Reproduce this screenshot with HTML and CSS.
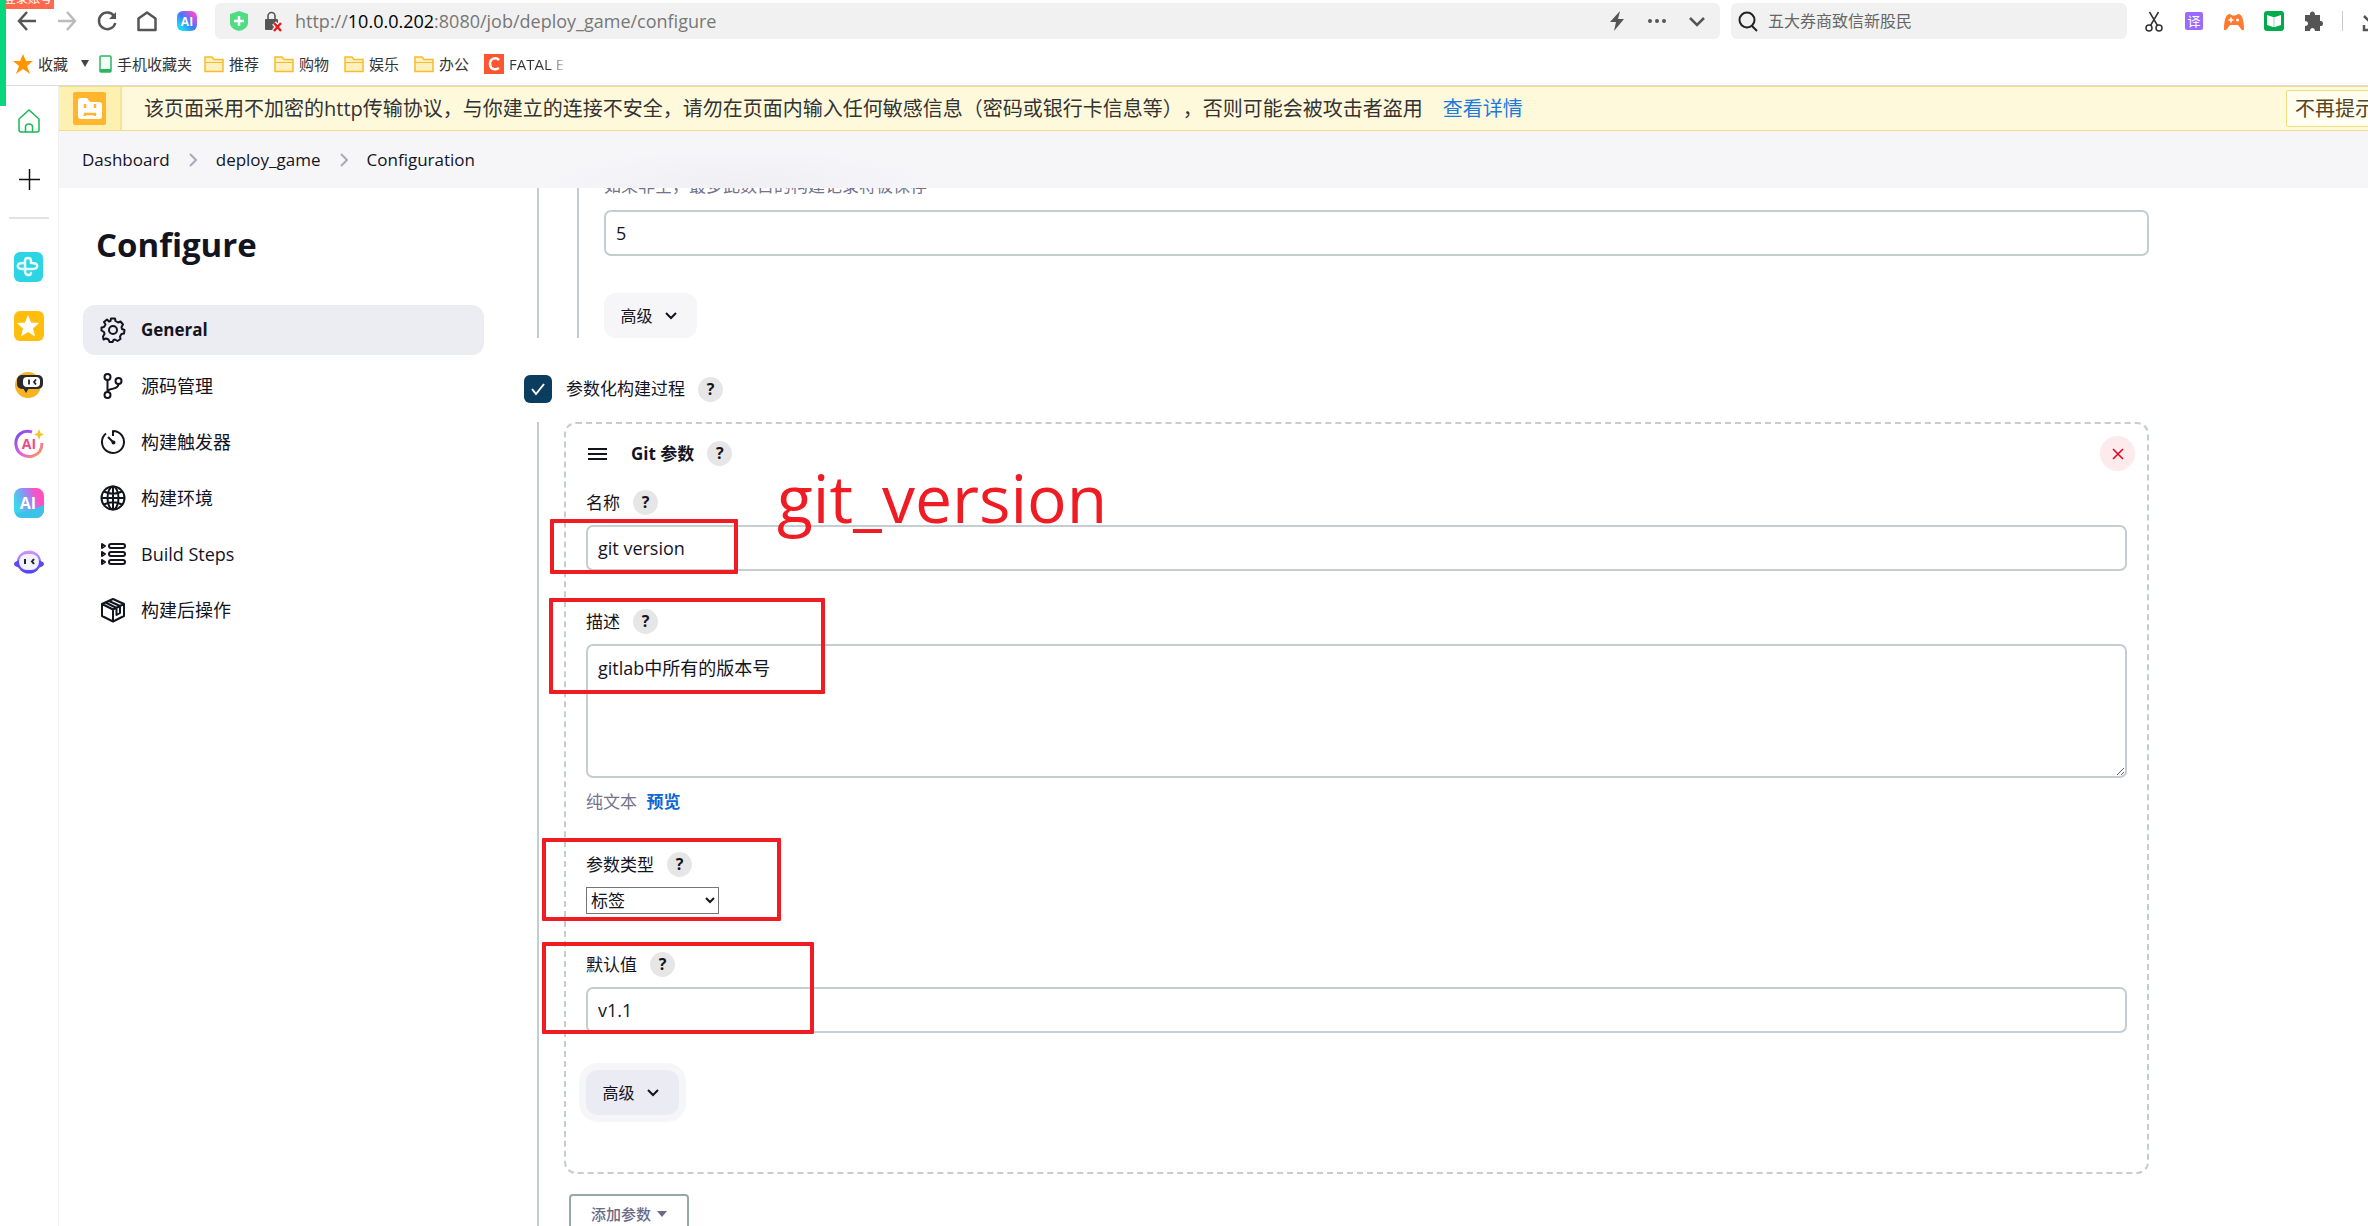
FILE: index.html
```html
<!DOCTYPE html>
<html lang="zh-CN">
<head>
<meta charset="utf-8">
<title>Configure - deploy_game</title>
<link rel="stylesheet" href="styles.css">
</head>
<body>
<div class="login-tag">登录账号</div>
<div class="green-bar"></div>

<header class="toolbar">
  <div class="tools">
    <button class="tool" aria-label="后退"><svg viewBox="0 0 24 24" class="line"><path d="M21 12H4M12 3 4 12l8 9"/></svg></button>
    <button class="tool muted" aria-label="前进"><svg viewBox="0 0 24 24" class="line"><path d="M3 12h17M12 3l8 9-8 9"/></svg></button>
    <button class="tool" aria-label="刷新"><svg viewBox="0 0 24 24" class="line"><path d="M19 7a8.300 8.300 0 1 0 1.300 7"/><path d="M21 3v7h-7z" fill="currentColor" stroke="none"/></svg></button>
    <button class="tool" aria-label="主页"><svg viewBox="0 0 24 24" class="line"><path d="M3.500 9.500 12 3.500l8.500 6V21h-17z" stroke-linejoin="round"/></svg></button>
    <button class="tool" aria-label="AI">
      <svg viewBox="0 0 24 24"><defs><linearGradient id="ai" x1="0" y1="1" x2="1" y2="0"><stop offset=".2" stop-color="#1fd3f5"/><stop offset=".5" stop-color="#3c7bff"/><stop offset=".85" stop-color="#f04bd0"/></linearGradient></defs><rect x="2" y="2" width="20" height="20" rx="6" fill="url(#ai)"/><text x="12" y="17" class="ai-text">AI</text></svg>
    </button>
  </div>
  <div class="address">
    <svg class="i24" viewBox="0 0 24 24"><path d="M3 5 12 2l9 3v9c0 4-4 7-9 8-5-1-9-4-9-8z" fill="#4fdc82"/><path d="M12 7v10M7 12h10" stroke="#fff" stroke-width="2.500"/></svg>
    <svg class="i24" viewBox="0 0 24 24"><rect x="4" y="10" width="13" height="11" rx="1" fill="#555"/><path d="M7 10V7a3.500 3.500 0 0 1 7 0v3" fill="none" stroke="#555" stroke-width="1.600"/><path d="m13 14 7 8m0-8-7 8" stroke="#f1f1f1" stroke-width="5"/><path d="m13 14 7 8m0-8-7 8" stroke="#e02020" stroke-width="2.500"/></svg>
    <span class="url">http://<b>10.0.0.202</b>:8080/job/deploy_game/configure</span>
    <div class="address-end">
      <svg class="i24" viewBox="0 0 24 24"><path d="M15 2 5 13h6l-2 9L19 10h-6z" fill="#555"/></svg>
      <svg class="i24" viewBox="0 0 24 24" fill="#555"><circle cx="5" cy="12" r="2"/><circle cx="12" cy="12" r="2"/><circle cx="19" cy="12" r="2"/></svg>
      <svg class="i24" viewBox="0 0 24 24"><path d="m5 9 7 7 7-7" fill="none" stroke="#555" stroke-width="2.500"/></svg>
    </div>
  </div>
  <label class="search">
    <svg class="i24" viewBox="0 0 24 24"><circle cx="11" cy="11" r="7.500" fill="none" stroke="#222" stroke-width="2"/><path d="m16 17 5 5" stroke="#222" stroke-width="2"/></svg>
    <input type="text" value="五大券商致信新股民" aria-label="搜索">
  </label>
  <div class="tools tools-end">
    <button class="tool" aria-label="截图"><svg viewBox="0 0 24 24" class="line thin"><circle cx="7" cy="19" r="3"/><circle cx="17" cy="19" r="3"/><path d="m8.500 16.500 8-13.500m-1 13.500L7.500 3"/></svg></button>
    <button class="tool" aria-label="翻译"><span class="translate">译</span></button>
    <button class="tool" aria-label="游戏"><svg viewBox="0 0 24 24"><path d="M2 20c0-6 1-14 5-15 2 0 2 1.500 5 1.500S15 5 17 5c4 1 5 9 5 15 0 2-2 1.500-3 0l-3-4H8l-3 4c-1 1.500-3 2-3 0z" fill="#ff7a30"/><path d="M9 8.500v5M6.500 11h5" stroke="#fff" stroke-width="1.600"/><circle cx="15.500" cy="11" r="1.600" fill="#fff"/></svg></button>
    <button class="tool" aria-label="阅读"><svg viewBox="0 0 24 24"><rect x="2" y="2" width="20" height="20" rx="3" fill="#00ab4c"/><path d="m5 6 6 2v10l-6-2zM19 6l-6 2v10l6-2z" fill="#fff"/><path d="M11 8h2v10h-2z" fill="#c8ecd8"/></svg></button>
    <button class="tool" aria-label="扩展"><svg viewBox="0 0 24 24"><path d="M3 6h5c-1-4 5-5 5 0h5v6c4-1 4 6 0 5v5h-5c0-4-5-4-5 0H3v-5c4 0 4-5 0-5z" fill="#555"/></svg></button>
    <span class="divider"></span>
    <button class="tool" aria-label="下载"><svg viewBox="0 0 24 24" class="line"><path d="m5 7 7 7 7-7M5 16v5h14v-5"/></svg></button>
  </div>
</header>

<nav class="bookmarks">
  <a href="#" class="mark fav"><svg class="i20" viewBox="0 0 20 20"><path d="m10 0 3 7h7l-6 5 3 8-7-5-7 5 3-8-6-5h7z" fill="#ff9500"/></svg>收藏</a>
  <svg class="caret" viewBox="0 0 8 7"><path d="M0 0h8L4 7z" fill="#444"/></svg>
  <a href="#" class="mark phone"><svg viewBox="0 0 13 18"><rect x="1" y="1" width="11" height="16" rx="1" fill="#f3fff6" stroke="#2db563" stroke-width="1.500"/><path d="M1 14h11v3H1z" fill="#2db563"/></svg>手机收藏夹</a>
  <a href="#" class="mark"><svg class="i20" viewBox="0 0 20 20"><path d="M1 17.500V3h7l2 2.500h9v12z" fill="#fff0bd" stroke="#f5bc2c" stroke-width="1.500"/><path d="M1 8.500h18" stroke="#f5bc2c"/></svg>推荐</a>
  <a href="#" class="mark"><svg class="i20" viewBox="0 0 20 20"><path d="M1 17.500V3h7l2 2.500h9v12z" fill="#fff0bd" stroke="#f5bc2c" stroke-width="1.500"/><path d="M1 8.500h18" stroke="#f5bc2c"/></svg>购物</a>
  <a href="#" class="mark"><svg class="i20" viewBox="0 0 20 20"><path d="M1 17.500V3h7l2 2.500h9v12z" fill="#fff0bd" stroke="#f5bc2c" stroke-width="1.500"/><path d="M1 8.500h18" stroke="#f5bc2c"/></svg>娱乐</a>
  <a href="#" class="mark"><svg class="i20" viewBox="0 0 20 20"><path d="M1 17.500V3h7l2 2.500h9v12z" fill="#fff0bd" stroke="#f5bc2c" stroke-width="1.500"/><path d="M1 8.500h18" stroke="#f5bc2c"/></svg>办公</a>
  <a href="#" class="mark"><svg class="i20" viewBox="0 0 20 20"><path d="M0 0h20v20H0z" fill="#fc5531"/><path d="M15 6c-3-3-9-2-9 4s6 6 9 4" fill="none" stroke="#fff" stroke-width="2.500"/></svg><span class="fade">FATAL E</span></a>
</nav>

<div class="window">
  <aside class="dock">
    <a href="#" aria-label="主页"><svg viewBox="0 0 30 30" fill="none" stroke="#19b955" stroke-width="1.500"><path d="M5 13 15 4l10 9v11c0 1-1 2-2 2H7c-1 0-2-1-2-2z"/><path d="M11.500 26v-5c0-4 7-4 7 0v5"/></svg></a>
    <a href="#" aria-label="添加"><svg viewBox="0 0 30 30"><path d="M15.500 4v21M5 14.500h21" stroke="#111" stroke-width="1.500"/></svg></a>
    <hr>
    <a href="#" aria-label="医疗"><svg viewBox="0 0 30 30"><rect width="29" height="30" rx="6" fill="#2dd5e4"/><path d="M17 11V9c0-4-6-4-6 0v10c0 5 6 5 6 2M17 11h1c7 0 7 6 0 6H9c-7 0-7-6 0-6h2" fill="none" stroke="#e8fdff" stroke-width="2.500" stroke-linecap="round"/></svg></a>
    <a href="#" aria-label="收藏"><svg viewBox="0 0 30 30"><rect width="30" height="30" rx="6" fill="#ffbd0c"/><path d="m14 4 3 7.500 8 .5-6 5.500 2 8-7-4.500-7 4.500 2-8L3 12l8-.5z" fill="#fff"/></svg></a>
    <a href="#" aria-label="助手"><svg viewBox="0 0 30 30"><circle cx="14" cy="15" r="13" fill="#f8b321"/><rect x="3" y="5" width="26" height="14" rx="5" fill="#2b2b2d"/><path d="m9 18 3 5 3-5z" fill="#2b2b2d"/><rect x="9" y="7" width="17" height="10" rx="4" fill="#fff"/><path d="M15 9.500v5M22 9.500 20 12l2 2.500" fill="none" stroke="#222" stroke-width="1.800"/></svg></a>
    <a href="#" aria-label="AI 写作"><svg viewBox="0 0 30 30"><defs><linearGradient id="ring" x1="0" y1="0" x2="1" y2="1"><stop offset="0" stop-color="#6a4cf0"/><stop offset=".5" stop-color="#e05be8"/><stop offset="1" stop-color="#ffa040"/></linearGradient></defs><path d="M18 3C8 0 1 7 2 16s10 13 17 11 9-8 9-13" fill="none" stroke="url(#ring)" stroke-width="3"/><path d="m25 0 1.500 4 3.500 1.500L26.500 7 25 11l-1.500-4L20 5.500 23.500 4z" fill="#f4c430"/><text x="15" y="20" class="ai-pink">AI</text></svg></a>
    <a href="#" aria-label="AI 搜索"><svg viewBox="0 0 30 30"><defs><linearGradient id="mix" x1="0" y1=".6" x2="1" y2=".2"><stop offset=".1" stop-color="#3ed5ea"/><stop offset=".5" stop-color="#9a86f5"/><stop offset=".8" stop-color="#ff4fc0"/></linearGradient></defs><rect width="30" height="30" rx="8" fill="url(#mix)"/><path d="M1 25c10 0 19-4 29-8v5a8 8 0 0 1-8 8H8c-3 0-6-2-7-5z" fill="#39c3ea"/><text x="14" y="21" class="ai-white">AI</text></svg></a>
    <a href="#" aria-label="机器人"><svg viewBox="0 0 30 30"><defs><linearGradient id="bot" x1="0" y1="0" x2="0" y2="1"><stop offset="0" stop-color="#d59aff"/><stop offset="1" stop-color="#4840f5"/></linearGradient></defs><ellipse cx="15" cy="15" rx="12" ry="11.500" fill="url(#bot)"/><ellipse cx="15" cy="17" rx="15" ry="5" fill="#5a4cf5"/><rect x="5" y="7" width="20" height="16" rx="8" fill="#f3f2fb"/><path d="M11 12v5M20 12l-2 2.500 2 2.500" stroke="#222" stroke-width="2" fill="none"/></svg></a>
  </aside>

  <div class="page">
    <div class="notice" role="alert">
      <div class="notice-icon"><svg viewBox="0 0 33 33"><rect width="33" height="33" rx="2" fill="#ffb52e"/><path d="M5 9c0-2 1-3 3-3h6l3 4h9c2 0 3 1 3 3v11c0 2-1 3-3 3H8c-2 0-3-1-3-3z" fill="#fff"/><path d="M12 12v4M22 12v4M12 24v-2h10v2" fill="none" stroke="#ffb52e" stroke-width="2.500"/></svg></div>
      <p>该页面采用不加密的http传输协议，与你建立的连接不安全，请勿在页面内输入任何敏感信息（密码或银行卡信息等），否则可能会被攻击者盗用<a href="#">查看详情</a></p>
      <button>不再提示</button>
    </div>

    <nav class="crumbs">
      <a href="#">Dashboard</a>
      <svg viewBox="0 0 8 14"><path d="m1 1 6 6-6 6"/></svg>
      <a href="#">deploy_game</a>
      <svg viewBox="0 0 8 14"><path d="m1 1 6 6-6 6"/></svg>
      <a href="#">Configuration</a>
    </nav>

    <div class="columns">
      <aside class="side">
        <h1>Configure</h1>
        <nav>
          <a href="#" class="item active"><svg viewBox="0 0 26 26"><path d="M10.500 4 11 1.500h4l.5 2.500 2.500 1.500 2.500-1 2.500 3-1.500 2.500.5 2 2.500 1-.5 3.500-2.500.5-1.500 2.500.5 2.500-3 2-2.500-1.500-1.500.5-1 2h-3l-1-2.500-2.500-1-2.500 1L3 19.500 4.500 17 4 15l-2.500-1.500v-3L4 10l1.500-2.500L4 5l3-2.500L9 4.500z"/><circle cx="13" cy="13" r="4"/></svg>General</a>
          <a href="#" class="item"><svg viewBox="0 0 26 26"><circle cx="7.500" cy="4" r="3"/><circle cx="7.500" cy="22" r="3"/><circle cx="18.500" cy="8" r="3"/><path d="M7.500 7v12c0-5 11-1 11-8"/></svg>源码管理</a>
          <a href="#" class="item"><svg viewBox="0 0 26 26"><path d="M6 4.500a11 11 0 1 0 7-2.500v5M8 8l5 5"/><circle cx="13.500" cy="13.500" r="1"/></svg>构建触发器</a>
          <a href="#" class="item"><svg viewBox="0 0 26 26"><circle cx="13" cy="13" r="11.500"/><ellipse cx="13" cy="13" rx="5.500" ry="11.500"/><path d="M13 1.500v23M1.500 13h23M4 6.500c6 3 12 3 18 0M4 19.500c6-3 12-3 18 0"/></svg>构建环境</a>
          <a href="#" class="item"><svg viewBox="0 0 26 26"><rect x="9" y="3" width="16" height="4" rx="2"/><rect x="9" y="11" width="16" height="4" rx="2"/><rect x="9" y="19" width="16" height="4" rx="2"/><path d="m2 3 3 2-3 2zM2 11l3 2-3 2zM2 19l3 2-3 2z"/></svg>Build Steps</a>
          <a href="#" class="item"><svg viewBox="0 0 26 26"><path d="m13 2 11 5v12l-11 5.500L2 19V7zM2 7l11 5.500L24 7M13 12.500v12M5.500 5.500l11 5.500v7l3.500-2V9L9 4"/></svg>构建后操作</a>
        </nav>
      </aside>

      <main class="form">
        <div class="group">
          <div class="nested">
            <p class="help-text" id="keep-help">如果非空，最多此数目的构建记录将被保存</p>
            <input class="text" type="text" value="5" aria-labelledby="keep-help">
            <button class="advanced">高级 <svg viewBox="0 0 12 8"><path d="m1 1 5 5 5-5"/></svg></button>
          </div>
        </div>

        <div class="check-row">
          <input type="checkbox" id="parameterized" checked>
          <label for="parameterized">参数化构建过程</label>
          <button class="help" aria-label="帮助">?</button>
        </div>

        <div class="group">
          <section class="param">
            <div class="param-head">
              <svg viewBox="0 0 22 14"><path d="M2 2h19M2 7h19M2 12h19"/></svg>
              <h2>Git 参数</h2>
              <button class="help" aria-label="帮助">?</button>
              <button class="remove" aria-label="删除"><svg viewBox="0 0 12 12"><path d="m1 1 10 10M11 1 1 11"/></svg></button>
            </div>
            <div class="field">
              <div class="field-label"><label for="name">名称</label><button class="help" aria-label="帮助">?</button></div>
              <input class="text" type="text" id="name" value="git version">
            </div>
            <div class="field">
              <div class="field-label"><label for="desc">描述</label><button class="help" aria-label="帮助">?</button></div>
              <textarea class="text" id="desc">gitlab中所有的版本号</textarea>
              <p class="format">纯文本 <a href="#">预览</a></p>
            </div>
            <div class="field">
              <div class="field-label"><label for="type">参数类型</label><button class="help" aria-label="帮助">?</button></div>
              <select id="type"><option>标签</option></select>
            </div>
            <div class="field">
              <div class="field-label"><label for="default">默认值</label><button class="help" aria-label="帮助">?</button></div>
              <input class="text" type="text" id="default" value="v1.1">
            </div>
            <button class="advanced focused">高级 <svg viewBox="0 0 12 8"><path d="m1 1 5 5 5-5"/></svg></button>
          </section>
          <button class="add">添加参数 <svg viewBox="0 0 10 6"><path d="M0 0h10L5 6z"/></svg></button>
        </div>

        <div class="note note-name"></div>
        <div class="note note-desc"></div>
        <div class="note note-type"></div>
        <div class="note note-default"></div>
        <div class="note-text">git_version</div>
      </main>
    </div>
  </div>
</div>
</body>
</html>
```
FILE: styles.css
```css
* { box-sizing: border-box; }

body {
  margin: 0;
  height: 100vh;
  display: flex;
  flex-direction: column;
  position: relative;
  overflow: hidden;
  background: #fff;
  color: #14141f;
  font: 17px/24px "Open Sans", "Noto Sans CJK SC", sans-serif;
  text-spacing-trim: space-all;
}

h1, h2, p { margin: 0; }
a { color: inherit; text-decoration: none; }
button, input, textarea, select { font: inherit; color: inherit; }
button { padding: 0; border: 0; background: none; }
svg { display: block; flex: none; }

.i24 { width: 24px; height: 24px; }
.i20 { width: 20px; height: 20px; }

/* Browser chrome */
.green-bar {
  position: absolute;
  left: 0;
  top: 0;
  width: 6px;
  height: 106px;
  background: #07d67d;
}

.login-tag {
  position: absolute;
  left: 4px;
  top: -10px;
  height: 19px;
  padding-right: 2px;
  background: #ff6a4f;
  color: #fff;
  font-size: 12px;
  line-height: 18px;
}

.toolbar {
  display: flex;
  flex: none;
  height: 42px;
  padding: 3px 0 3px 15px;
}

.tools { display: flex; align-items: center; gap: 16px; }
.tool { width: 24px; height: 24px; flex: none; color: #555; }
.tool.muted { color: #bbb; }
.line { fill: none; stroke: currentColor; stroke-width: 2.5; }
.line.thin { stroke: #333; stroke-width: 1.5; }
.ai-text, .ai-pink, .ai-white { font: bold 12px "Open Sans", sans-serif; text-anchor: middle; fill: #fff; }
.ai-pink { font-size: 14px; fill: #f04a86; }
.ai-white { font-size: 16px; }

.address {
  display: flex;
  align-items: center;
  flex: 1;
  min-width: 0;
  gap: 10px;
  margin: 0 11px 0 16px;
  padding: 0 11px 0 12px;
  border-radius: 6px;
  background: #f1f1f1;
}
.url { flex: 1; overflow: hidden; white-space: nowrap; font-size: 18px; color: #777; }
.url b { font-weight: 400; color: #000; }
.address-end { display: flex; gap: 16px; }

.search {
  display: flex;
  align-items: center;
  flex: none;
  gap: 8px;
  width: 396px;
  padding-left: 5px;
  border-radius: 6px;
  background: #f1f1f1;
}
.search input { flex: 1; min-width: 0; padding: 0; border: 0; background: none; font-size: 16px; color: #666; }

.tools-end { margin: 0 -15px 0 15px; flex: none; }
.divider { width: 1px; height: 20px; background: #ccc; }
.translate {
  display: block;
  width: 18px;
  height: 18px;
  margin: 0 auto;
  border-radius: 2px;
  background: #9b6bff;
  color: #fff;
  font-size: 13px;
  line-height: 18px;
}

.bookmarks {
  display: flex;
  flex: none;
  align-items: center;
  gap: 15px;
  height: 44px;
  padding: 0 0 0 13px;
  border-bottom: 1px solid #dcdcdc;
  font-size: 15px;
  color: #333;
}
.mark { display: flex; align-items: center; gap: 5px; }
.mark.fav { margin-right: -2px; }
.caret { width: 8px; height: 7px; margin-right: -5px; }
.phone { margin-right: -3px; }
.phone svg { width: 13px; height: 18px; }
.fade {
  background: linear-gradient(90deg, #333 75%, #ddd 100%);
  background-clip: text;
  color: transparent;
}

.window { display: flex; flex: 1; min-height: 0; }

.dock {
  display: flex;
  flex-direction: column;
  flex: none;
  width: 59px;
  padding: 20px 0 0 14px;
  border-right: 1px solid #f0f0f0;
}
.dock svg { width: 30px; height: 30px; }
.dock a { margin-bottom: 29px; }
.dock hr { width: 40px; height: 2px; margin: -7px 0 33px -5px; border: 0; background: #e2e2e2; }

/* Page */
.page { display: flex; flex-direction: column; flex: 1; min-width: 0; }

.notice {
  display: flex;
  align-items: center;
  flex: none;
  height: 45px;
  overflow: hidden;
  border: solid #f1dd88;
  border-width: 1px 0;
  background: #fff9dc;
  font-size: 20px;
  line-height: 32px;
  color: #333;
}
.notice-icon {
  display: flex;
  align-items: center;
  justify-content: center;
  align-self: stretch;
  flex: none;
  width: 63px;
  border-right: 2px solid #f5e3a0;
  background: #fdf0b0;
}
.notice-icon svg { width: 33px; height: 33px; }
.notice p { flex: 1; min-width: 0; margin-left: 22px; white-space: nowrap; }
.notice a { margin-left: 20px; color: #1a7ae0; }
.notice button {
  flex: none;
  height: 37px;
  margin-right: -16px;
  padding: 0 8px;
  border: 1px solid #f0df7e;
  border-radius: 2px;
  background: #fffdf0;
  color: #554422;
}

.crumbs {
  display: flex;
  align-items: center;
  flex: none;
  gap: 19px;
  height: 57px;
  padding-left: 23px;
  background: radial-gradient(ellipse 200px 40px at 680px 57px, #efeff4, transparent), #f6f6f9;
}
.crumbs svg { width: 8px; height: 14px; fill: none; stroke: #a9a9bd; stroke-width: 2; }

.columns { display: flex; flex: 1; gap: 40px; min-height: 0; padding-left: 24px; overflow: hidden; }

.side { flex: none; width: 401px; padding-top: 33px; }
.side h1 { margin-bottom: 36px; padding-left: 13px; font-size: 33px; line-height: 48px; font-weight: 700; }
.side nav { display: flex; flex-direction: column; gap: 6px; }
.item {
  display: flex;
  align-items: center;
  gap: 15px;
  height: 50px;
  padding-left: 17px;
  border-radius: 12px;
  font-size: 18px;
}
.item.active { background: #ececf3; font-size: 17px; font-weight: 700; }
.item svg { width: 26px; height: 26px; fill: none; stroke: #14141f; stroke-width: 2; stroke-linejoin: round; }

.form { position: relative; flex: 1; min-width: 0; max-width: 1625px; margin-top: -14px; }
.group { margin-left: 13px; padding-left: 25px; border-left: 2px solid #c3cdd2; }
.nested { margin-left: 13px; padding-left: 25px; border-left: 2px solid #c3cdd2; }
.help-text { margin-bottom: 12px; color: #73738c; }

.text {
  display: block;
  width: 100%;
  height: 46px;
  padding: 0 10px;
  border: 2px solid #c3cdd2;
  border-radius: 7px;
  background: #fff;
  font-size: 18px;
}
textarea.text { height: 134px; padding-top: 10px; }

.advanced {
  display: flex;
  align-items: center;
  justify-content: center;
  gap: 12px;
  width: 93px;
  height: 45px;
  margin-top: 37px;
  padding-right: 4px;
  border-radius: 12px;
  background: #f6f6f9;
  font-size: 16px;
}
.advanced svg { width: 12px; height: 8px; fill: none; stroke: #14141f; stroke-width: 2; }
.advanced.focused { background: #ebebf4; box-shadow: 0 0 0 7px #f6f6f9; }

.check-row { display: flex; align-items: center; height: 28px; margin: 37px 0 19px; }
.check-row input {
  appearance: none;
  width: 28px;
  height: 28px;
  margin: 0 14px 0 0;
  border-radius: 6px;
  background: #0b3d60 url("data:image/svg+xml,%3Csvg xmlns='http://www.w3.org/2000/svg' viewBox='0 0 28 28'%3E%3Cpath d='m8 14 4 5 8-10' fill='none' stroke='%23fff' stroke-width='2'/%3E%3C/svg%3E");
}

.help {
  width: 25px;
  height: 25px;
  margin-left: 13px;
  border-radius: 50%;
  background: #e6e6e6;
  font-size: 16px;
  font-weight: 700;
  line-height: 25px;
}

.param { padding: 12px 20px 57px; border: 2px dashed #c3cdd2; border-radius: 12px; }
.param-head { display: flex; align-items: center; height: 35px; }
.param-head > svg { width: 22px; height: 14px; margin-right: 23px; fill: none; stroke: #14141f; stroke-width: 2; }
.param-head h2 { font-size: 17px; line-height: 24px; font-weight: 700; }
.remove {
  display: flex;
  align-items: center;
  justify-content: center;
  width: 35px;
  height: 35px;
  margin: 0 -8px 0 auto;
  border-radius: 50%;
  background: #fdeaec;
}
.remove svg { width: 12px; height: 12px; fill: none; stroke: #e6001f; stroke-width: 1.5; }

.field { margin-top: 38px; }
.param-head + .field { margin-top: 19px; }
.field-label { display: flex; align-items: center; height: 25px; margin-bottom: 10px; }
.format { margin-top: 12px; color: #73738c; }
.format a { margin-left: 5px; color: #0b66d6; font-weight: 700; }
select { display: block; width: 133px; height: 27px; padding: 0; border: 1px solid #767676; border-radius: 0; background: #fff; }

.add {
  display: flex;
  align-items: center;
  justify-content: center;
  gap: 6px;
  width: 120px;
  height: 40px;
  margin: 20px 0 20px 5px;
  border: 2px solid #98a6ae;
  border-radius: 4px;
  color: #6b6b88;
  font-size: 15px;
  font-weight: 500;
}
.add svg { width: 10px; height: 6px; fill: #6b6b88; }

/* Red annotations drawn over the form */
.note { position: absolute; border: 4px solid #ef1c24; border-radius: 1px; pointer-events: none; }
.note-name { left: 26px; top: 345px; width: 188px; height: 55px; }
.note-desc { left: 25px; top: 424px; width: 276px; height: 96px; }
.note-type { left: 18px; top: 664px; width: 239px; height: 83px; }
.note-default { left: 18px; top: 768px; width: 272px; height: 92px; }
.note-text { position: absolute; left: 253px; top: 275px; color: #ef1c24; font-size: 66px; line-height: 96px; pointer-events: none; }
```
